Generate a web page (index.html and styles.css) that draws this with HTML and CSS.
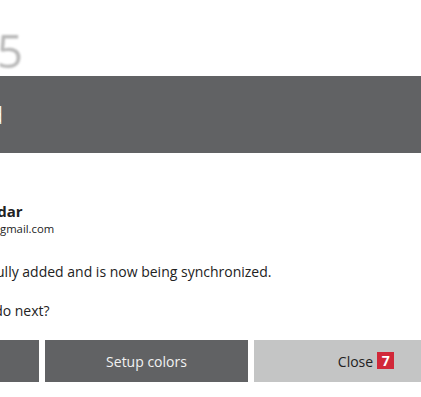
FILE: index.html
```html
<!DOCTYPE html>
<html lang="en">
<head>
  <meta charset="UTF-8" />
  <meta name="viewport" content="width=device-width, initial-scale=1" />
  <title>Account added</title>
  <link rel="stylesheet" href="styles.css">
</head>
<body>
  <div class="screen">
    <div class="app-title">Office 365</div>

    <div class="dialog">
      <div class="dialog-header">
        <h1 class="dialog-title">Account added</h1>
      </div>

      <div class="dialog-body">
        <div class="account">
          <div class="account-icon"></div>
          <div class="account-info">
            <div class="account-name">Google Calendar</div>
            <div class="account-email">johnathan.doe84@gmail.com</div>
          </div>
        </div>

        <p class="message">An account was successfully added and is now being synchronized.</p>
        <p class="message prompt">What would you like to do next?</p>
      </div>

      <div class="dialog-buttons">
        <button class="btn btn-dark">Add another</button>
        <button class="btn btn-dark">Setup colors</button>
        <button class="btn btn-light">Close <span class="countdown">7</span></button>
      </div>
    </div>
  </div>
</body>
</html>
```

FILE: styles.css
```css
body {
  margin: 0;
  overflow: hidden;
  background-color: #fff;
  font-family: 'Open Sans', 'Liberation Sans', sans-serif;
  color: #222;
}

/* the whole view is wider than the window, we see its right part */
.screen {
  margin-left: -164px;
  width: 700px;
}

.app-title {
  height: 76px;
  margin-left: -30px;
  font-size: 46px;
  line-height: 100px;
  color: #b8b8b8;
  filter: blur(0.9px);
  white-space: nowrap;
  overflow: hidden;
}

.dialog-header {
  height: 77px;
  background-color: #616264;
  display: flex;
  align-items: center;
}

.dialog-title {
  margin: 0;
  font-size: 24.7px;
  font-weight: 300;
  color: #fff;
  white-space: nowrap;
}

.dialog-body {
  padding-top: 46px;
}

.account {
  display: flex;
  align-items: center;
  gap: 8px;
}

.account-icon {
  width: 56px;
  height: 40px;
}

.account-name {
  font-size: 15px;
  font-weight: 700;
  line-height: 20px;
}

.account-email {
  font-size: 11.3px;
  line-height: 16px;
}

.message {
  margin: 23px 0 0;
  font-size: 14px;
  line-height: 19px;
  white-space: nowrap;
}

.message + .message {
  margin-top: 20px;
}

.prompt {
  padding-left: 6px;
}

.dialog-buttons {
  display: flex;
  gap: 6px;
  margin-top: 20px;
}

.btn {
  position: relative;
  width: 203px;
  height: 42px;
  border: none;
  padding: 0;
  font-family: 'Open Sans', 'Liberation Sans', sans-serif;
  font-size: 14px;
}

.btn-dark {
  background-color: #616264;
  color: #f2f2f2;
}

.btn-light {
  background-color: #c4c5c5;
  color: #222;
}

/* badge sits right of the centered label */
.countdown {
  position: absolute;
  top: 12px;
  margin-left: 4px;
  width: 17px;
  height: 17px;
  background-color: #d12839;
  color: #fff;
  font-weight: 700;
  font-size: 14px;
  line-height: 17px;
}
```
